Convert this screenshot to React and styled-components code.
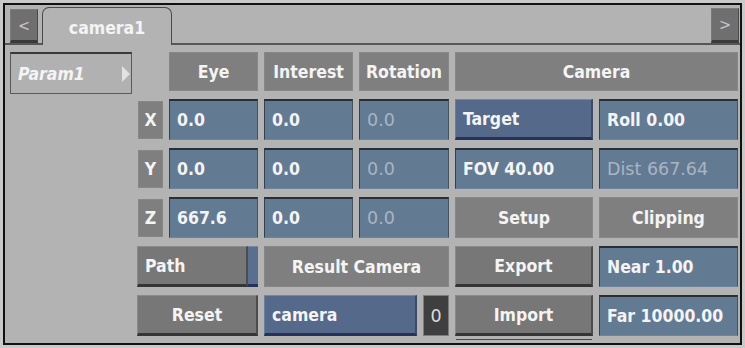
import React from "react";
import styled, { createGlobalStyle } from "styled-components";

const GlobalStyle = createGlobalStyle`
  html, body {
    margin: 0;
    padding: 0;
    background: #c9c9c9;
  }
`;

const Frame = styled.div`
  box-sizing: border-box;
  margin: 3px;
  width: 739px;
  height: 342px;
  border: 2px solid #111;
  background: #b3b3b3;
  display: flex;
  flex-direction: column;
  font-family: "DejaVu Sans Condensed", "DejaVu Sans", sans-serif;
  font-stretch: condensed;
  font-weight: bold;
  font-size: 17.5px;
  color: #f4f4f4;
`;

const TabBar = styled.div`
  box-sizing: border-box;
  height: 40px;
  display: flex;
  align-items: flex-end;
  padding: 0 1px 0 5px;
  border-bottom: 2px solid #575757;
`;

const ArrowButton = styled.div`
  box-sizing: border-box;
  width: 28px;
  height: ${(p) => p.$h}px;
  margin-left: ${(p) => (p.$right ? "auto" : "0")};
  display: flex;
  align-items: center;
  justify-content: center;
  background: #6f6f6f;
  border-top: 1px solid #7d7d7d;
  border-left: 1px solid #7a7a7a;
  border-right: 1px solid #4a4a4a;
  border-bottom: 3px solid #3a3a3a;
  color: #c4c4c4;
  font-weight: normal;
  font-size: 16px;
`;

const Tab = styled.div`
  box-sizing: border-box;
  width: 130px;
  height: 38px;
  margin-left: 4px;
  margin-bottom: -2px;
  padding-top: 2px;
  display: flex;
  align-items: center;
  justify-content: center;
  background: #b3b3b3;
  border: 1px solid #4a4a4a;
  border-bottom: none;
  border-radius: 7px 7px 0 0;
`;

const Body = styled.div`
  display: flex;
  align-items: flex-start;
  gap: 6px;
  padding: 7px 0 0 5px;
`;

const ParamPanel = styled.div`
  box-sizing: border-box;
  width: 122px;
  height: 42px;
  display: flex;
  align-items: center;
  justify-content: space-between;
  padding: 0 1px 0 7px;
  background: #b1b1b1;
  border: 1px solid #5a5a5a;
  border-top: 2px solid #3a3a3a;
  font-style: italic;
`;

const Triangle = styled.span`
  width: 0;
  height: 0;
  border-left: 8px solid #e2e2e2;
  border-top: 8px solid transparent;
  border-bottom: 8px solid transparent;
`;

const Grid = styled.div`
  display: grid;
  grid-template-columns: 25px 89px 89px 90px 138px 139px;
  grid-template-rows: 39px repeat(5, 41px);
  column-gap: 6px;
  row-gap: 8px;
`;

const Label = styled.div`
  box-sizing: border-box;
  grid-column: span ${(p) => p.$span || 1};
  display: flex;
  align-items: center;
  justify-content: center;
  background: #7f7f7f;
  border: 1px solid #878787;
  ${(p) => (p.$axis ? "margin: 2px 0 1px;" : "")}
`;

const Field = styled.div`
  box-sizing: border-box;
  grid-column: span ${(p) => p.$span || 1};
  display: flex;
  align-items: center;
  padding-left: 7px;
  background: #637a93;
  border-top: 2px solid #262e38;
  border-left: 1px solid #34404d;
  border-right: 1px solid #44525f;
  border-bottom: 1px solid #6e849b;
  color: ${(p) => (p.$dim ? "#a9b5c3" : "#f4f4f4")};
  font-weight: ${(p) => (p.$dim ? "normal" : "bold")};
  ${(p) =>
    p.$dim ? 'font-family: "DejaVu Sans", sans-serif; font-stretch: normal;' : ""}
`;

const Button = styled.div`
  box-sizing: border-box;
  grid-column: span ${(p) => p.$span || 1};
  display: flex;
  align-items: center;
  justify-content: ${(p) => (p.$left ? "flex-start" : "center")};
  padding-left: ${(p) => (p.$left ? "7px" : "0")};
  margin-left: ${(p) => (p.$shift ? "-1px" : "0")};
  background: #777777;
  border-top: 1px solid #8a8a8a;
  border-left: 1px solid #8a8a8a;
  border-right: 2px solid #4c4c4c;
  border-bottom: 3px solid #353535;
  box-shadow: ${(p) => (p.$stacked ? "0 4px 0 -1px #b3b3b3, 0 5px 0 -1px #4a4a4a" : "none")};
`;

const BlueButton = styled.div`
  box-sizing: border-box;
  flex: 1;
  display: flex;
  align-items: center;
  padding-left: 7px;
  background: #55698b;
  border-top: 1px solid #7488a6;
  border-left: 1px solid #6a7e9c;
  border-right: 2px solid #3c4a68;
  border-bottom: 3px solid #27325a;
`;

const PathButton = styled.div`
  grid-column: span 2;
  display: flex;
  margin-left: -1px;
`;

const PathMain = styled(Button)`
  flex: 1;
`;

const PathIndicator = styled.div`
  width: 10px;
  background: #5a6f90;
  border-top: 1px solid #7488a6;
  border-bottom: 3px solid #27325a;
`;

const Combo = styled.div`
  grid-column: span 2;
  display: flex;
  gap: 6px;
`;

const ZeroBox = styled.div`
  box-sizing: border-box;
  width: 26px;
  display: flex;
  align-items: center;
  justify-content: center;
  background: #3f3f3f;
  border: 1px solid #7c7c7c;
  color: #dcdcdc;
  font-family: "DejaVu Sans", sans-serif;
  font-weight: normal;
  font-stretch: normal;
`;

const Empty = styled.div``;

const rows = [
  { axis: "X", eye: "0.0", interest: "0.0", rotation: "0.0" },
  { axis: "Y", eye: "0.0", interest: "0.0", rotation: "0.0" },
  { axis: "Z", eye: "667.6", interest: "0.0", rotation: "0.0" },
];

export default function App() {
  return (
    <>
      <GlobalStyle />
      <Frame>
        <TabBar>
          <ArrowButton $h={34}>&lt;</ArrowButton>
          <Tab>camera1</Tab>
          <ArrowButton $h={35} $right>
            &gt;
          </ArrowButton>
        </TabBar>
        <Body>
          <ParamPanel>
            Param1
            <Triangle />
          </ParamPanel>
          <Grid>
            <Empty />
            <Label>Eye</Label>
            <Label>Interest</Label>
            <Label>Rotation</Label>
            <Label $span={2}>Camera</Label>

            {rows.map((r, i) => (
              <React.Fragment key={r.axis}>
                <Label $axis>{r.axis}</Label>
                <Field>{r.eye}</Field>
                <Field>{r.interest}</Field>
                <Field $dim>{r.rotation}</Field>
                {i === 0 && (
                  <>
                    <BlueButton>Target</BlueButton>
                    <Field>Roll 0.00</Field>
                  </>
                )}
                {i === 1 && (
                  <>
                    <Field>FOV 40.00</Field>
                    <Field $dim>Dist 667.64</Field>
                  </>
                )}
                {i === 2 && (
                  <>
                    <Label>Setup</Label>
                    <Label>Clipping</Label>
                  </>
                )}
              </React.Fragment>
            ))}

            <PathButton>
              <PathMain $left>Path</PathMain>
              <PathIndicator />
            </PathButton>
            <Label $span={2}>Result Camera</Label>
            <Button>Export</Button>
            <Field>Near 1.00</Field>

            <Button $span={2} $shift>
              Reset
            </Button>
            <Combo>
              <BlueButton>camera</BlueButton>
              <ZeroBox>0</ZeroBox>
            </Combo>
            <Button $stacked>Import</Button>
            <Field>Far 10000.00</Field>
          </Grid>
        </Body>
      </Frame>
    </>
  );
}
